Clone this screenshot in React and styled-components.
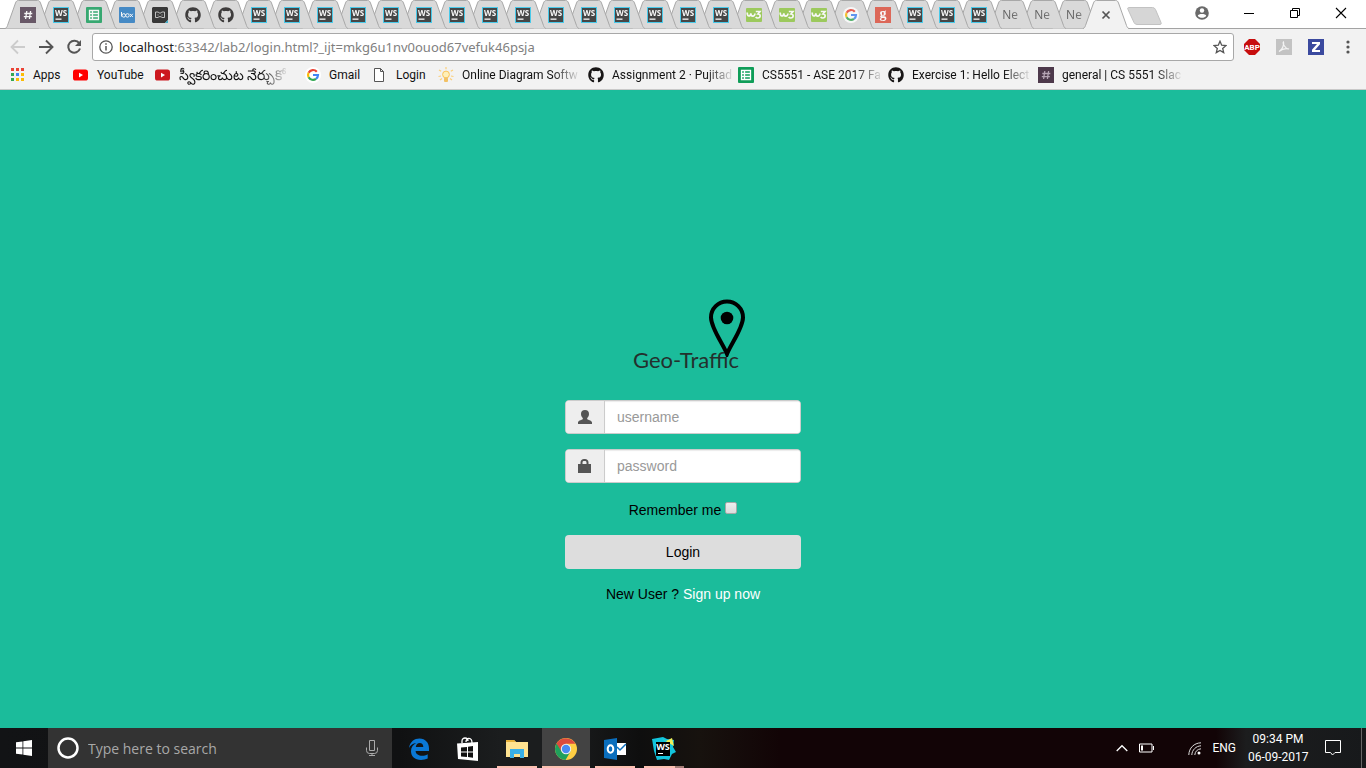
import React from "react";
import styled, { createGlobalStyle } from "styled-components";
import { FaGithub } from "react-icons/fa";

const ui = `Roboto, "Open Sans", sans-serif`;
const wide = `"Open Sans", "Noto Sans", sans-serif`;

const Global = createGlobalStyle`
  *, *::before, *::after { box-sizing: border-box; }
  body { margin: 0; font-family: ${ui}; font-size: 12px; color: #111; }
  button, input { font: inherit; }
  button { border: 0; padding: 0; background: none; color: inherit; }
  a { color: inherit; text-decoration: none; }
  svg { display: block; }
`;

const Screen = styled.div`
  min-height: 100vh;
  display: flex;
  flex-direction: column;
  overflow: hidden;
`;

/* ---------- browser chrome ---------- */

const TabBar = styled.header`
  display: flex;
  height: 29px;
  background: #fff;
  border-bottom: 1px solid #a3a3a3;
`;

const TabStrip = styled.div`
  flex: 1;
  min-width: 0;
  display: flex;
  padding-left: 12px;
`;

const Tab = styled.button`
  position: relative;
  z-index: ${(p) => p.$z};
  flex: ${(p) => (p.$active ? "0 0 31px" : `${p.$grow} 1 0`)};
  min-width: 0;
  height: ${(p) => (p.$active ? 29 : 28)}px;
  display: flex;
  align-items: center;
  justify-content: center;
`;

const TabShape = styled.svg`
  position: absolute;
  top: 0;
  left: 50%;
  margin-left: -23px;
  z-index: -1;
`;

const TabFace = styled.span`
  display: block;
  opacity: ${(p) => (p.$active ? 1 : 0.8)};
  padding-top: ${(p) => (p.$active ? 1 : 2)}px;
`;

const TabText = styled.span`
  display: block;
  padding-right: 2px;
  color: #444;
  font-family: ${wide};
  line-height: 16px;
  -webkit-mask-image: linear-gradient(90deg, #000 50%, rgba(0, 0, 0, 0.6));
`;

const WindowArea = styled.div`
  flex: 0 0 244px;
  display: flex;
  align-items: center;
  justify-content: space-between;
  padding: 0 19px 2px 5px;
`;

const NewTab = styled.button`
  width: 35px;
  height: 18px;
  margin-top: 6px;
`;

const WindowButtons = styled.div`
  display: flex;
  align-items: center;
  gap: 34px;
`;

const Toolbar = styled.div`
  display: flex;
  align-items: center;
  height: 35px;
  padding: 3px 10px 3px 9px;
  background: #f2f2f2;
`;

const NavButtons = styled.div`
  display: flex;
  gap: 10px;
  margin-right: 9px;
`;

const AddressBox = styled.form`
  flex: 1;
  min-width: 0;
  height: 28px;
  display: flex;
  align-items: center;
  padding: 0 6px;
  background: #fff;
  border: 1px solid #a8a8a8;
  border-radius: 3px;
`;

const Address = styled.div`
  flex: 1;
  margin-left: 6px;
  font-family: "Noto Sans", sans-serif;
  font-size: 13px;
  line-height: 20px;
  white-space: nowrap;
  color: #808080;
  b { font-weight: 400; color: #222; }
`;

const Extensions = styled.div`
  display: flex;
  align-items: center;
  gap: 16px;
  margin-left: 10px;
`;

const Bookmarks = styled.nav`
  display: flex;
  height: 26px;
  padding: 0 9px 4px;
  background: #f2f2f2;
  border-bottom: 1px solid #c9c9c9;
`;

const Bookmark = styled.a`
  display: flex;
  align-items: center;
  gap: 8px;
  flex: 0 0 ${(p) => p.$w}px;
  min-width: 0;
  svg { flex: none; }
`;

const BookmarkLabel = styled.span`
  white-space: nowrap;
  line-height: 20px;
  font-size: ${(p) => (p.$large ? 14 : 12)}px;
  ${(p) => p.$fade && "-webkit-mask-image: linear-gradient(90deg, #000 calc(100% - 26px), rgba(0, 0, 0, 0.1));"}
`;

/* ---------- login page ---------- */

const Page = styled.main`
  flex: 1;
  display: flex;
  flex-direction: column;
  align-items: center;
  justify-content: center;
  padding-top: 84px;
  background: #1bbc9b;
  font-family: "Liberation Sans", Arial, sans-serif;
  font-size: 14px;
  line-height: 20px;
  color: #000;
`;

const LoginForm = styled.form`
  width: 236px;
  display: flex;
  flex-direction: column;
  align-items: center;
`;

const Brand = styled.div`
  position: relative;
  padding: 46px 0 0 6px;
  margin-bottom: 25px;
`;

const Pin = styled.svg`
  position: absolute;
  top: 0;
  right: -7px;
`;

const Title = styled.h1`
  margin: 0;
  font-family: Lato, sans-serif;
  font-size: 22px;
  font-weight: 400;
  line-height: 30px;
  color: #23302d;
`;

const InputGroup = styled.label`
  display: flex;
  width: 100%;
  height: 34px;
  margin-bottom: 15px;
  border: 1px solid #ccc;
  border-radius: 4px;
  overflow: hidden;
  background: #fff;
`;

const Addon = styled.span`
  flex: 0 0 39px;
  display: flex;
  align-items: center;
  justify-content: center;
  background: #eee;
  border-right: 1px solid #ccc;
`;

const TextField = styled.input`
  flex: 1;
  min-width: 0;
  border: 0;
  outline: 0;
  padding: 0 12px;
  background: #fff;
  box-shadow: inset 0 1px 1px rgba(0, 0, 0, 0.08);
  &::placeholder { color: #999; opacity: 1; }
`;

const Remember = styled.label`
  display: flex;
  align-items: center;
  gap: 4px;
  margin-top: 2px;
  margin-bottom: 15px;
`;

const Check = styled.input`
  appearance: none;
  width: 12px;
  height: 12px;
  margin: 0 0 4px;
  border: 1px solid #a9a9a9;
  border-radius: 2px;
  background: linear-gradient(#eee, #dcdcdc);
`;

const LoginButton = styled.button`
  width: 100%;
  height: 34px;
  margin-bottom: 15px;
  border-radius: 4px;
  background: #ddd;
`;

const SignUp = styled.p`
  margin: 0;
  a { color: #fff; }
`;

/* ---------- taskbar ---------- */

const Taskbar = styled.footer`
  display: flex;
  height: 40px;
  color: #fff;
  background: linear-gradient(90deg, #121315 0, #101112 400px, #1b1d1e 500px, #1b1d1e 560px, #0e0e0e 640px, #17120e 700px, #120406 780px, #120406 calc(100% - 150px), #1c1d1e calc(100% - 120px), #17191b 100%);
`;

const StartButton = styled.button`
  flex: 0 0 48px;
  display: flex;
  align-items: center;
  justify-content: center;
`;

const Search = styled.label`
  flex: 0 0 344px;
  display: flex;
  align-items: center;
  padding: 0 14px 0 8px;
  background: #333;
`;

const SearchInput = styled.input`
  flex: 1;
  min-width: 0;
  margin-left: 8px;
  padding: 0;
  border: 0;
  outline: 0;
  background: none;
  font-family: ${wide};
  font-size: 14px;
  &::placeholder { color: #a8a8a8; opacity: 1; }
`;

const Apps = styled.div`
  flex: 1;
  display: flex;
  padding-left: 3px;
  gap: 1px;
`;

const barFill = (p) => {
  if (!p.$open) return "none";
  return p.$stacked ? "linear-gradient(90deg, #fbc0b0 31px, #a37d76 31px)" : "#fbc0b0";
};

const AppButton = styled.button`
  width: 48px;
  padding-top: 1px;
  display: flex;
  align-items: center;
  justify-content: center;
  background: ${(p) => (p.$active ? "#434343" : "none")};
  position: relative;
  &::after {
    content: "";
    position: absolute;
    bottom: 0;
    left: ${(p) => (p.$active ? 0 : 4)}px;
    right: ${(p) => (p.$active ? 0 : 4)}px;
    height: 2px;
    background: ${barFill};
  }
`;

const Tray = styled.div`
  display: flex;
  align-items: center;
  padding-right: 4px;
`;

const TrayButton = styled.button`
  margin-right: ${(p) => p.$gap}px;
`;

const Clock = styled.time`
  width: 60px;
  margin: 0 17px 0 12px;
  text-align: center;
  line-height: 18px;
  white-space: nowrap;
`;

const DesktopEdge = styled.span`
  align-self: stretch;
  width: 1px;
  background: #666;
`;

/* ---------- icons ---------- */

const WS = () => (
  <svg width="16" height="16" viewBox="0 0 16 16">
    <rect width="16" height="16" fill="#26c6ee" />
    <rect x="1" y="1" width="14" height="14" fill="#222" />
    <text x="8" y="9" textAnchor="middle" fontFamily="Open Sans" fontWeight="700" fontSize="8" fill="#fff">WS</text>
    <rect x="2.5" y="11.5" width="6" height="1.3" fill="#fff" />
  </svg>
);

const Hash = ({ ink = "#fff" }) => (
  <svg width="16" height="16" viewBox="0 0 16 16">
    <rect width="16" height="16" fill="#4d394b" />
    <path d="M6.8 4 5.6 12M10.6 4 9.4 12M4.3 6.5h8M3.8 9.7h8" stroke={ink} strokeWidth="1.3" fill="none" />
  </svg>
);

const Sheet = () => (
  <svg width="16" height="16" viewBox="0 0 16 16">
    <rect width="16" height="16" rx="1" fill="#0f9d58" />
    <path d="M3.5 3.5h9v9h-9zM3.5 6.5h9M3.5 9.5h9M6.5 3.5v9" stroke="#fff" strokeWidth="1.3" fill="none" />
  </svg>
);

const BoxIcon = () => (
  <svg width="16" height="16" viewBox="0 0 16 16">
    <rect width="16" height="16" rx="1" fill="#2277c1" />
    <path d="M2.5 5v4.5M6.5 8.4a1.7 1.7 0 1 1-3.5 0 1.7 1.7 0 0 1 3.5 0M10.2 8.4a1.7 1.7 0 1 1-3.5 0 1.7 1.7 0 0 1 3.5 0M11 6.8l2.8 3.2M13.8 6.8 11 10" stroke="#fff" strokeWidth="1" fill="none" />
  </svg>
);

const Mango = () => (
  <svg width="16" height="16" viewBox="0 0 16 16">
    <path d="M1 0h14l1 1v12l-3 3H1l-1-1V1z" fill="#101010" />
    <path d="M3.500 5H6l2 1.300L10 5h2.500v5.500H10l-1-.8H7l-1 .8H3.500zM6 7.500v1M10 7.500v1" stroke="#ccc" strokeWidth=".9" fill="none" />
    <path d="M13 16h3v-3z" fill="#19a6c8" />
  </svg>
);

const W3 = () => (
  <svg width="16" height="16" viewBox="0 0 16 16">
    <rect width="16" height="14" y="1" rx="1" fill="#8dc63f" />
    <path d="M1.200 5.500c0 4.500 3.300 4.500 3.600.8 0 3.700 3.700 3.800 4.200.2M9.800 4.500H14L12 7c3 0 2.800 4-.3 4-1 0-1.600-.4-2-1" stroke="#fff" strokeWidth="1.700" fill="none" />
  </svg>
);

const Google = () => (
  <svg width="16" height="16" viewBox="0 0 16 16">
    <circle cx="8" cy="8" r="8" fill="#fff" />
    <g fill="none" strokeWidth="2.200">
      <path d="M11.800 4.700A5 5 0 0 0 3.600 5.700" stroke="#ea4335" />
      <path d="M3.600 5.700a5 5 0 0 0 0 4.600" stroke="#fbbc05" />
      <path d="M3.600 10.300a5 5 0 0 0 7.400 1.600" stroke="#34a853" />
      <path d="M11 11.900A5 5 0 0 0 13 8H8" stroke="#4285f4" />
    </g>
  </svg>
);

const GIcon = () => (
  <svg width="16" height="16" viewBox="0 0 16 16">
    <rect width="16" height="16" fill="#dd4b39" />
    <text x="8" y="11" textAnchor="middle" fontFamily="Liberation Serif" fontWeight="700" fontSize="14" fill="#fff">g</text>
  </svg>
);

const Github = () => <FaGithub size={16} color="#181616" />;

const YouTube = ({ dark }) => (
  <svg width="16" height="16" viewBox="0 0 16 16">
    <rect x="0" y="2.500" width="15" height="11" rx="2.600" fill={dark ? "#cc181e" : "#f00"} />
    <path d="M6 5.800v4.600l4-2.300z" fill="#fff" />
  </svg>
);

const AppsGrid = () => (
  <svg width="16" height="16" viewBox="0 0 16 16">
    {["#ea4335", "#ea4335", "#ea4335", "#34a853", "#4285f4", "#fbbc05", "#34a853", "#fbbc05", "#fbbc05"].map((c, i) => (
      <rect key={i} x={2 + (i % 3) * 5} y={1 + Math.floor(i / 3) * 5} width="3" height="3" fill={c} />
    ))}
  </svg>
);

const FileIcon = () => (
  <svg width="16" height="16" viewBox="0 0 16 16">
    <path d="M2.500 1.500h6l3 3v10h-9zM8.500 1.500v3h3" fill="#fff" stroke="#555" />
  </svg>
);

const Bulb = () => (
  <svg width="16" height="16" viewBox="0 0 16 16">
    <circle cx="8" cy="7.500" r="3.400" fill="#fff0b8" stroke="#f9c35a" />
    <rect x="6" y="10.500" width="4" height="4.500" rx="1" fill="#f2c164" />
    <path d="M8 0v2.300M1 3l2.200 1.300M15 3l-2.200 1.300M.5 9.500 3 9M15.500 9.500 13 9M2 13l2-1.400M14 13l-2-1.400" stroke="#fbcf7a" strokeWidth="1.200" />
  </svg>
);

const icons = {
  hash: <Hash />, ws: <WS />, sheet: <Sheet />, box: <BoxIcon />, mango: <Mango />,
  gh: <Github />, w3: <W3 />, google: <Google />, g: <GIcon />,
  text: <TabText>Ne</TabText>,
};

const tabs = [
  "hash", "ws", "sheet", "box", "mango", "gh", "gh",
  ...Array(15).fill("ws"),
  "w3", "w3", "w3", "google", "g", "ws", "ws", "ws", "text", "text", "text",
];

const bookmarks = [
  { label: "Apps", icon: <AppsGrid />, w: 64 },
  { label: "YouTube", icon: <YouTube />, w: 82 },
  { label: "స్వీకరించుట నేర్చుకో", icon: <YouTube dark />, w: 150, fade: true, large: true },
  { label: "Gmail", icon: <Google />, w: 67 },
  { label: "Login", icon: <FileIcon />, w: 66 },
  { label: "Online Diagram Softw", icon: <Bulb />, w: 150, fade: true },
  { label: "Assignment 2 · Pujitad", icon: <Github />, w: 150, fade: true },
  { label: "CS5551 - ASE 2017 Fa", icon: <Sheet />, w: 150, fade: true },
  { label: "Exercise 1: Hello Elect", icon: <Github />, w: 150, fade: true },
  { label: "general | CS 5551 Slac", icon: <Hash ink="#b5a4b3" />, w: 150, fade: true },
];

const Outline = ({ active }) => (
  <TabShape width="46" height="29" viewBox="0 0 46 29">
    <path
      d="M0 28.500C1.500 28 2 27 2.500 25.500L10.500 3C11.300 1 12 .5 13.500.5H32.500C34 .5 34.700 1 35.500 3L43.500 25.500C44 27 44.500 28 46 28.500"
      fill={active ? "#f2f2f2" : "#d9d9d9"}
      stroke="#a8a8a8"
    />
    {active && <path d="M1 28.500H45" stroke="#f2f2f2" />}
  </TabShape>
);

const Edge = () => (
  <svg width="22" height="22" viewBox="0 0 22 22">
    <path d="M1 10C2 3.500 6.500.5 11.500.5 17.500.5 21 5 21 10.200V13H7.600c.3 3.300 3.200 4.700 6.300 4.700 2.300 0 4-.5 5.800-1.500v4.300c-1.900.9-4.300 1.400-6.700 1.400C6.800 21.900 3 18.300 3 13.200c0-3.700 2-6.700 5.300-8.200C5 5.400 2.500 7.200 1 10zm6.800-1h7.500c0-2.500-1.400-4-3.600-4C9.600 5 8.200 6.600 7.800 9z" fill="#0a78d6" />
  </svg>
);

const Store = () => (
  <svg width="22" height="24" viewBox="0 0 22 24">
    <path d="M5 6V4c0-4 6-4 6 0M9 5c0-5 6-5 6 1" stroke="#fff" strokeWidth="1.300" fill="none" />
    <path d="M0 6.500 21 5v19L1 22z" fill="#fff" />
    <path d="M4 10.500l6-.6v4.600H4zM11 9.800l5-.7v5.400h-5zM4 15.500h6V20l-6-.6zM11 15.500h5v5.300l-5-.7z" fill="#111" />
  </svg>
);

const Explorer = () => (
  <svg width="22" height="19" viewBox="0 0 22 19">
    <path d="M0 1h8l2 2h12v15H0z" fill="#ffe391" />
    <path d="M0 1h8l2 2H0z" fill="#e8b23a" />
    <path d="M4 10h14v9h-4v-4H8v4H4z" fill="#39b0e8" />
  </svg>
);

const Chrome = () => (
  <svg width="22" height="22" viewBox="0 0 22 22">
    <circle cx="11" cy="11" r="11" fill="#ffce43" />
    <path d="M1.500 5.500A11 11 0 0 0 10.500 22L15.500 13.600 11 11z" fill="#1fa05c" />
    <path d="M1.500 5.500A11 11 0 0 1 20.500 5.800H11L6.500 13.600z" fill="#dd4b3e" />
    <circle cx="11" cy="11" r="5.200" fill="#f2f2f2" />
    <circle cx="11" cy="11" r="4.200" fill="#4a8af4" />
  </svg>
);

const Outlook = () => (
  <svg width="23" height="22" viewBox="0 0 23 22">
    <path d="M0 2 13 0v22L0 20z" fill="#0a6ebd" />
    <path d="M13 5h9v12h-9z" fill="#fff" />
    <path d="m13 9 3 3 6-6" stroke="#0a6ebd" strokeWidth="1.500" fill="none" />
    <ellipse cx="6.500" cy="11" rx="2.800" ry="3.700" fill="none" stroke="#fff" strokeWidth="2" />
  </svg>
);

const WebStorm = () => (
  <svg width="24" height="24" viewBox="0 0 24 24">
    <path d="M0 2 11 0l4 2 7 1-1 7 3 5-4 2-3 6-5-1-7 1-3-9z" fill="#12c4dc" />
    <path d="m10 2 4 2 6-3 2 8z" fill="#eef05a" />
    <rect x="4" y="5" width="14" height="14" fill="#000" />
    <text x="11" y="13" textAnchor="middle" fontFamily="Open Sans" fontWeight="700" fontSize="9" fill="#fff">WS</text>
    <rect x="6" y="16" width="5" height="1" fill="#fff" />
  </svg>
);

export default function App() {
  return (
    <Screen>
      <Global />
      <TabBar>
        <TabStrip>
          {tabs.map((t, i) => (
            <Tab key={i} $z={50 - i} $grow={i < 24 ? 33 : 32} type="button">
              <Outline />
              <TabFace>{icons[t]}</TabFace>
            </Tab>
          ))}
          <Tab $active $z={60} type="button" aria-label="Close tab">
            <Outline active />
            <TabFace $active>
              <svg width="10" height="10" viewBox="0 0 10 10">
                <path d="m1.500 1.500 7 7M8.500 1.500l-7 7" stroke="#555" strokeWidth="1.700" />
              </svg>
            </TabFace>
          </Tab>
        </TabStrip>
        <WindowArea>
          <NewTab type="button" aria-label="New tab">
            <svg width="35" height="18" viewBox="0 0 35 18">
              <path d="M1.500.5h24q2 0 3 2l5.500 13q.8 2-1 2H10q-2 0-3-2L1 2.500q-.8-2 .5-2z" fill="#d6d6d6" stroke="#c2c2c2" />
            </svg>
          </NewTab>
          <WindowButtons>
            <button type="button" aria-label="Profile">
              <svg width="14" height="14" viewBox="0 0 14 14">
                <circle cx="7" cy="7" r="6.800" fill="#6a6a6a" />
                <circle cx="7" cy="4.500" r="2.200" fill="#fff" />
                <path d="M2.800 9.800C3 7.300 11 7.300 11.200 9.800 9.500 12.500 4.500 12.500 2.800 9.800z" fill="#fff" />
              </svg>
            </button>
            <button type="button" aria-label="Minimize">
              <svg width="12" height="12" viewBox="0 0 12 12"><path d="M1 6.500h10" stroke="#000" /></svg>
            </button>
            <button type="button" aria-label="Restore">
              <svg width="12" height="12" viewBox="0 0 12 12"><path d="M1.500 3.500h7v7h-7zM3.500 3.500v-2h7v7h-2" fill="none" stroke="#000" /></svg>
            </button>
            <button type="button" aria-label="Close">
              <svg width="12" height="12" viewBox="0 0 12 12"><path d="m1 1 10 10M11 1 1 11" stroke="#000" strokeWidth="1.100" /></svg>
            </button>
          </WindowButtons>
        </WindowArea>
      </TabBar>

      <Toolbar>
        <NavButtons>
          <button type="button" aria-label="Back">
            <svg width="18" height="18" viewBox="0 0 18 18"><path d="M16 9H3M9 2.500 2.500 9 9 15.500" fill="none" stroke="#ccc" strokeWidth="1.800" /></svg>
          </button>
          <button type="button" aria-label="Forward">
            <svg width="18" height="18" viewBox="0 0 18 18"><path d="M2 9h13M9 2.500 15.500 9 9 15.500" fill="none" stroke="#555" strokeWidth="1.900" /></svg>
          </button>
          <button type="button" aria-label="Reload">
            <svg width="18" height="18" viewBox="0 0 18 18">
              <path d="M14.200 5.200A6 6 0 1 0 15 10.500" fill="none" stroke="#555" strokeWidth="2" />
              <path d="M16 2v6h-6z" fill="#555" />
            </svg>
          </button>
        </NavButtons>
        <AddressBox>
          <svg width="14" height="14" viewBox="0 0 14 14">
            <circle cx="7" cy="7" r="6.200" fill="none" stroke="#555" strokeWidth="1.300" />
            <path d="M7 6v4.500M7 3.300v1.500" stroke="#555" strokeWidth="1.500" />
          </svg>
          <Address><b>localhost</b>:63342/lab2/login.html?_ijt=mkg6u1nv0ouod67vefuk46psja</Address>
          <button type="button" aria-label="Bookmark this page">
            <svg width="14" height="14" viewBox="0 0 14 14">
              <path d="m7 1.200 1.700 4 4.300.4-3.300 2.800 1 4.200L7 10.400l-3.700 2.200 1-4.200L1 5.600l4.300-.4z" fill="none" stroke="#555" strokeWidth="1.300" />
            </svg>
          </button>
        </AddressBox>
        <Extensions>
          <button type="button" aria-label="Adblock Plus">
            <svg width="16" height="16" viewBox="0 0 16 16">
              <path d="M5 0h6l5 5v6l-5 5H5l-5-5V5z" fill="#c70d0d" />
              <text x="8" y="11" textAnchor="middle" fontFamily="Roboto" fontWeight="700" fontSize="8" fill="#fff">ABP</text>
            </svg>
          </button>
          <button type="button" aria-label="PDF">
            <svg width="16" height="16" viewBox="0 0 16 16">
              <rect width="16" height="16" fill="#c3c3c3" />
              <path d="M3 12.500C6 11 8.500 6 7.500 3c-1 1 1 6.500 5.500 7-3-1-7 0-10 2.500z" fill="none" stroke="#f4f4f4" strokeWidth="1.200" />
            </svg>
          </button>
          <button type="button" aria-label="Zotero">
            <svg width="16" height="16" viewBox="0 0 16 16">
              <rect width="16" height="16" fill="#3b4a9f" />
              <path d="M4 3h8v2.200L7 11h5v2H4v-2.200L9 5H4z" fill="#fff" />
            </svg>
          </button>
          <button type="button" aria-label="Menu">
            <svg width="16" height="16" viewBox="0 0 16 16" fill="#555">
              <circle cx="8" cy="3" r="1.600" /><circle cx="8" cy="8" r="1.600" /><circle cx="8" cy="13" r="1.600" />
            </svg>
          </button>
        </Extensions>
      </Toolbar>

      <Bookmarks>
        {bookmarks.map((b) => (
          <Bookmark key={b.label} href="#" $w={b.w}>
            {b.icon}
            <BookmarkLabel $fade={b.fade} $large={b.large}>{b.label}</BookmarkLabel>
          </Bookmark>
        ))}
      </Bookmarks>

      <Page>
        <LoginForm>
          <Brand>
            <Title>Geo-Traffic</Title>
            <Pin width="38" height="58" viewBox="0 0 38 58">
              <path d="M19 55C15 45 3 29 3 18.500a16 16 0 0 1 32 0C35 29 23 45 19 55z" fill="none" stroke="#000" strokeWidth="4" />
              <circle cx="19" cy="19" r="6.300" />
            </Pin>
          </Brand>
          <InputGroup>
            <Addon>
              <svg width="14" height="14" viewBox="0 0 14 14">
                <path d="M7 0c2.600 0 4 1.600 4 4 0 1.800-.7 3.200-1.800 4v1.200c2 .9 4.800 1.600 4.800 3.300V14H0v-1.500c0-1.700 2.800-2.400 4.800-3.300V8C3.700 7.200 3 5.800 3 4 3 1.600 4.400 0 7 0z" fill="#555" />
              </svg>
            </Addon>
            <TextField type="text" placeholder="username" aria-label="username" />
          </InputGroup>
          <InputGroup>
            <Addon>
              <svg width="14" height="14" viewBox="0 0 14 14">
                <path d="M0 5h2.500V3.500C2.500 1.300 4 0 6 0h1c2 0 3.500 1.300 3.500 3.500V5H13v9H0zm4.500 0h4V3.500c0-1-.6-1.500-1.500-1.500H6c-.9 0-1.500.5-1.500 1.500z" fill="#555" />
              </svg>
            </Addon>
            <TextField type="password" placeholder="password" aria-label="password" />
          </InputGroup>
          <Remember>Remember me<Check type="checkbox" /></Remember>
          <LoginButton type="button">Login</LoginButton>
          <SignUp>New User ? <a href="#">Sign up now</a></SignUp>
        </LoginForm>
      </Page>

      <Taskbar>
        <StartButton type="button" aria-label="Start">
          <svg width="16" height="16" viewBox="0 0 16 16" fill="#fff">
            <path d="M0 2.300 6.500 1.400v6.200H0zM7.300 1.300 16 0v7.600H7.300zM0 8.400h6.500v6.200L0 13.700zM7.300 8.400H16V16l-8.700-1.300z" />
          </svg>
        </StartButton>
        <Search>
          <svg width="24" height="24" viewBox="0 0 24 24"><circle cx="12" cy="12" r="9.500" fill="none" stroke="#fff" strokeWidth="2.500" /></svg>
          <SearchInput type="text" placeholder="Type here to search" aria-label="Type here to search" />
          <svg width="12" height="16" viewBox="0 0 12 16">
            <path d="M3.500.5h5v10h-5zM.5 7.500v3q0 3 3 3h5q3 0 3-3v-3M6 13.500v2M3 15.500h6" fill="none" stroke="#aaa" />
          </svg>
        </Search>
        <Apps>
          <AppButton type="button" aria-label="Edge"><Edge /></AppButton>
          <AppButton type="button" aria-label="Store"><Store /></AppButton>
          <AppButton type="button" aria-label="File Explorer" $open><Explorer /></AppButton>
          <AppButton type="button" aria-label="Chrome" $open $active><Chrome /></AppButton>
          <AppButton type="button" aria-label="Outlook" $open><Outlook /></AppButton>
          <AppButton type="button" aria-label="WebStorm" $open $stacked><WebStorm /></AppButton>
        </Apps>
        <Tray>
          <TrayButton type="button" aria-label="Show hidden icons" $gap={11}>
            <svg width="12" height="8" viewBox="0 0 12 8"><path d="m.7 7 5.300-5.300L11.300 7" fill="none" stroke="#fff" strokeWidth="1.300" /></svg>
          </TrayButton>
          <TrayButton type="button" aria-label="Battery" $gap={34}>
            <svg width="15" height="10" viewBox="0 0 15 10"><path d="M.5 1h12.500v8H.5zM14.500 3v4" fill="none" stroke="#fff" /><path d="M2 2.500h2v5H2z" fill="#fff" /></svg>
          </TrayButton>
          <TrayButton type="button" aria-label="Network" $gap={11}>
            <svg width="13" height="13" viewBox="0 0 13 13">
              <path d="M.8 13C1 6 6 1 13 .8M3.800 13C4 8 8 4 13 3.800M6.800 13c.2-3.500 2.700-6 6.200-6.200" fill="none" stroke="#ddd" />
              <circle cx="11" cy="11" r="1.500" fill="#fff" />
            </svg>
          </TrayButton>
          <span>ENG</span>
          <Clock>09:34 PM<br />06-09-2017</Clock>
          <TrayButton type="button" aria-label="Notifications" $gap={20}>
            <svg width="16" height="16" viewBox="0 0 16 16"><path d="M.5.500h15v12H10L7.500 15 5.500 12.500h-5z" fill="none" stroke="#fff" /></svg>
          </TrayButton>
          <DesktopEdge />
        </Tray>
      </Taskbar>
    </Screen>
  );
}
